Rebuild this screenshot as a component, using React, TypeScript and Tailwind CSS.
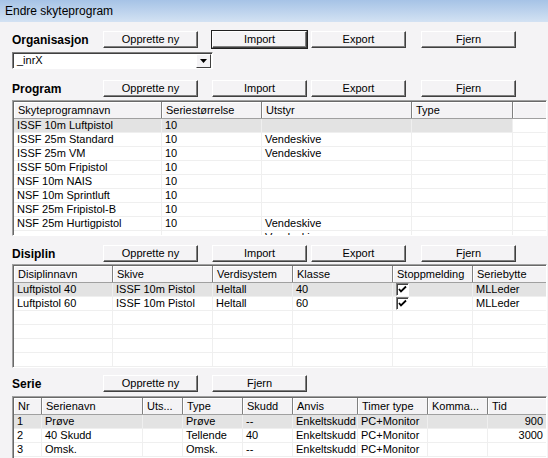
import React from 'react'

type Col = { title: string; w: number; align?: 'right' }

interface GridProps {
  cols: Col[]
  rows: React.ReactNode[][]
  height: number
  emptyRows?: number
  selected?: number
  fillSelected?: boolean
}

function Check() {
  return (
    <span className="inline-flex h-[13px] w-[13px] items-center justify-center border border-t-[#808080] border-l-[#808080] border-b-white border-r-white bg-white shadow-[inset_1px_1px_0_#404040]">
      <svg width="9" height="9" viewBox="0 0 9 9">
        <path d="M1 4 L3 6.5 L8 1.5" stroke="#000" strokeWidth="1.8" fill="none" />
      </svg>
    </span>
  )
}

function Btn({ label, className = '', focused = false }: { label: string; className?: string; focused?: boolean }) {
  return (
    <button
      className={
        'h-[17px] w-[95px] bg-[#f4f3f5] text-[11px] leading-none text-black border border-t-white border-l-white border-b-[#404040] border-r-[#404040] shadow-[inset_-1px_-1px_0_#808080] ' +
        (focused ? 'outline outline-1 outline-[#202020] ' : '') +
        className
      }
    >
      {label}
    </button>
  )
}

function Grid({ cols, rows, height, emptyRows = 0, selected = 0, fillSelected = false }: GridProps) {
  const filler = Array.from({ length: emptyRows })
  return (
    <div
      className="mr-[1px] overflow-hidden border border-t-[#a0a0a0] border-l-[#a0a0a0] border-b-white border-r-white bg-white shadow-[inset_1px_1px_0_#696969] pl-[1px] pt-[1px]"
      style={{ height }}
    >
      {/* header */}
      <div className="flex h-[17px] bg-[#f4f3f5] border-b border-[#a0a0a0]">
        {cols.map((c, i) => (
          <div
            key={i}
            className="flex shrink-0 items-center border-r border-[#808080] pl-[4px] shadow-[inset_1px_1px_0_#ffffff] whitespace-nowrap overflow-hidden"
            style={{ width: c.w }}
          >
            {c.title}
          </div>
        ))}
        <div className="flex-1 shadow-[inset_1px_1px_0_#ffffff]" />
      </div>
      {rows.map((r, ri) => (
        <div key={ri} className="flex h-[14px] border-b border-[#efefef]">
          {cols.map((c, ci) => (
            <div
              key={ci}
              className={
                'flex shrink-0 items-center border-r border-[#efefef] px-[3px] whitespace-nowrap overflow-hidden ' +
                (c.align === 'right' ? 'justify-end ' : '') +
                (ri === selected ? 'bg-[#e3e3e3]' : '')
              }
              style={{ width: c.w }}
            >
              {r[ci]}
            </div>
          ))}
          <div className={'flex-1 ' + (ri === selected && fillSelected ? 'bg-[#e3e3e3]' : '')} />
        </div>
      ))}
      {filler.map((_, fi) => (
        <div key={fi} className="flex h-[14px] border-b border-[#efefef]">
          {cols.map((c, ci) => (
            <div key={ci} className="shrink-0 border-r border-[#efefef]" style={{ width: c.w }} />
          ))}
          <div className="flex-1" />
        </div>
      ))}
    </div>
  )
}

function Section({ label, buttons, className = '', focusImport = false }: { label: string; buttons: string[]; className?: string; focusImport?: boolean }) {
  const gaps = ['ml-0', 'ml-[14px]', 'ml-[4px]', 'ml-[15px]']
  return (
    <div className={'flex h-[17px] items-center ' + className}>
      <div className="w-[91px] text-[12px] font-bold">{label}</div>
      {buttons.map((b, i) => (
        <Btn key={b} label={b} className={gaps[i]} focused={focusImport && b === 'Import'} />
      ))}
    </div>
  )
}

export default function App() {
  const progRows = [
    ['ISSF 10m Luftpistol', '10', '', ''],
    ['ISSF 25m Standard', '10', 'Vendeskive', ''],
    ['ISSF 25m VM', '10', 'Vendeskive', ''],
    ['ISSF 50m Fripistol', '10', '', ''],
    ['NSF 10m NAIS', '10', '', ''],
    ['NSF 10m Sprintluft', '10', '', ''],
    ['NSF 25m Fripistol-B', '10', '', ''],
    ['NSF 25m Hurtigpistol', '10', 'Vendeskive', ''],
    ['', '', 'Vendeskive', ''],
  ]
  const disRows = [
    ['Luftpistol 40', 'ISSF 10m Pistol', 'Heltall', '40', <Check key="c1" />, 'MLLeder'],
    ['Luftpistol 60', 'ISSF 10m Pistol', 'Heltall', '60', <Check key="c2" />, 'MLLeder'],
  ]
  const serRows = [
    ['1', 'Prøve', '', 'Prøve', '--', 'Enkeltskudd', 'PC+Monitor', '', '900'],
    ['2', '40 Skudd', '', 'Tellende', '40', 'Enkeltskudd', 'PC+Monitor', '', '3000'],
    ['3', 'Omsk.', '', 'Omsk.', '--', 'Enkeltskudd', 'PC+Monitor', '', ''],
  ]

  return (
    <div className="h-[458px] w-[548px] overflow-hidden bg-[#f4f3f5] font-['Liberation_Sans',Arial,sans-serif] text-[11px] text-black">
      {/* Title bar */}
      <div className="flex h-[22px] items-center bg-gradient-to-b from-[#a6c3e6] to-[#d3e2f3] pl-[5px] text-[12px]">
        Endre skyteprogram
      </div>

      <div className="pl-[12px]">
        <Section label="Organisasjon" buttons={['Opprette ny', 'Import', 'Export', 'Fjern']} className="mt-[9px]" focusImport />

        {/* Dropdown */}
        <div className="mt-[4px] flex h-[17px] w-[201px] items-center border border-t-[#808080] border-l-[#808080] border-b-white border-r-white bg-white shadow-[inset_1px_1px_0_#404040]">
          <span className="flex-1 pl-[4px]">_inrX</span>
          <span className="mr-[1px] flex h-[14px] w-[15px] items-center justify-center border border-t-white border-l-white border-b-[#404040] border-r-[#404040] bg-[#f4f3f5]">
            <svg width="7" height="4" viewBox="0 0 7 4">
              <path d="M0 0 H7 L3.5 4 Z" fill="#000" />
            </svg>
          </span>
        </div>

        <Section label="Program" buttons={['Opprette ny', 'Import', 'Export', 'Fjern']} className="mt-[11px]" />
        <div className="mt-[3px]">
          <Grid
            cols={[
              { title: 'Skyteprogramnavn', w: 148 },
              { title: 'Seriestørrelse', w: 100 },
              { title: 'Utstyr', w: 150 },
              { title: 'Type', w: 101 },
            ]}
            rows={progRows}
            height={136}
          />
        </div>

        <Section label="Disiplin" buttons={['Opprette ny', 'Import', 'Export', 'Fjern']} className="mt-[9px]" />
        <div className="mt-[2px]">
          <Grid
            cols={[
              { title: 'Disiplinnavn', w: 99 },
              { title: 'Skive', w: 100 },
              { title: 'Verdisystem', w: 80 },
              { title: 'Klasse', w: 100 },
              { title: 'Stoppmelding', w: 80 },
              { title: 'Seriebytte', w: 74 },
            ]}
            rows={disRows}
            emptyRows={4}
            height={104}
            fillSelected
          />
        </div>

        <Section label="Serie" buttons={['Opprette ny', 'Fjern']} className="mt-[7px]" />
        <div className="mt-[4px]">
          <Grid
            cols={[
              { title: 'Nr', w: 28 },
              { title: 'Serienavn', w: 101 },
              { title: 'Uts...', w: 40 },
              { title: 'Type', w: 60 },
              { title: 'Skudd', w: 50 },
              { title: 'Anvis', w: 65 },
              { title: 'Timer type', w: 70 },
              { title: 'Komma...', w: 60 },
              { title: 'Tid', w: 59, align: 'right' },
            ]}
            rows={serRows}
            height={80}
            fillSelected
          />
        </div>
      </div>
    </div>
  )
}
